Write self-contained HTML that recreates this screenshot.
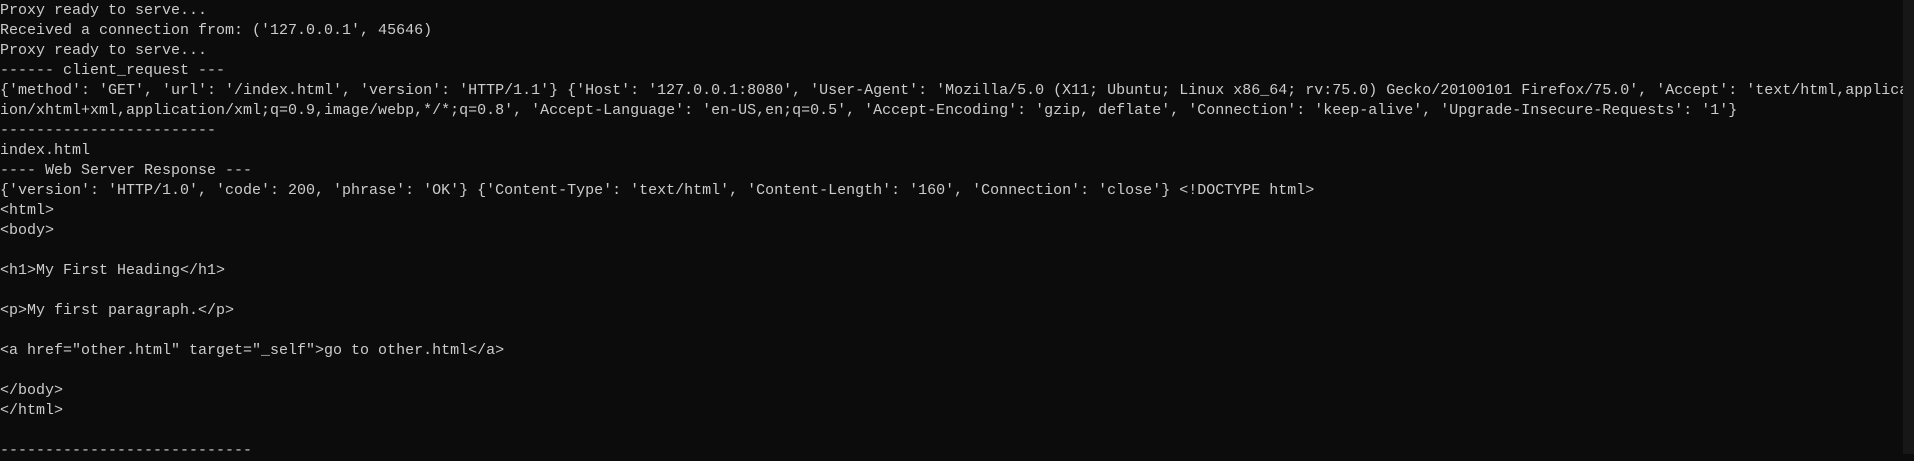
<!DOCTYPE html>
<html><head><meta charset="utf-8"><style>
html,body{margin:0;padding:0;background:#0c0c0c;width:1914px;height:454px;overflow:hidden}
pre{margin:0;position:absolute;left:0;top:1px;font-family:"Liberation Mono",monospace;font-size:15px;line-height:20px;color:#cccccc;white-space:pre}
.sb{position:absolute;left:1903px;top:0;width:11px;height:454px;background:#171717}
</style></head><body>
<pre>Proxy ready to serve...
Received a connection from: ('127.0.0.1', 45646)
Proxy ready to serve...
------ client_request ---
{'method': 'GET', 'url': '/index.html', 'version': 'HTTP/1.1'} {'Host': '127.0.0.1:8080', 'User-Agent': 'Mozilla/5.0 (X11; Ubuntu; Linux x86_64; rv:75.0) Gecko/20100101 Firefox/75.0', 'Accept': 'text/html,applica
ion/xhtml+xml,application/xml;q=0.9,image/webp,*/*;q=0.8', 'Accept-Language': 'en-US,en;q=0.5', 'Accept-Encoding': 'gzip, deflate', 'Connection': 'keep-alive', 'Upgrade-Insecure-Requests': '1'}
------------------------
index.html
---- Web Server Response ---
{'version': 'HTTP/1.0', 'code': 200, 'phrase': 'OK'} {'Content-Type': 'text/html', 'Content-Length': '160', 'Connection': 'close'} &lt;!DOCTYPE html&gt;
&lt;html&gt;
&lt;body&gt;

&lt;h1&gt;My First Heading&lt;/h1&gt;

&lt;p&gt;My first paragraph.&lt;/p&gt;

&lt;a href="other.html" target="_self"&gt;go to other.html&lt;/a&gt;

&lt;/body&gt;
&lt;/html&gt;

----------------------------</pre>
<div class="sb"></div>
</body></html>
